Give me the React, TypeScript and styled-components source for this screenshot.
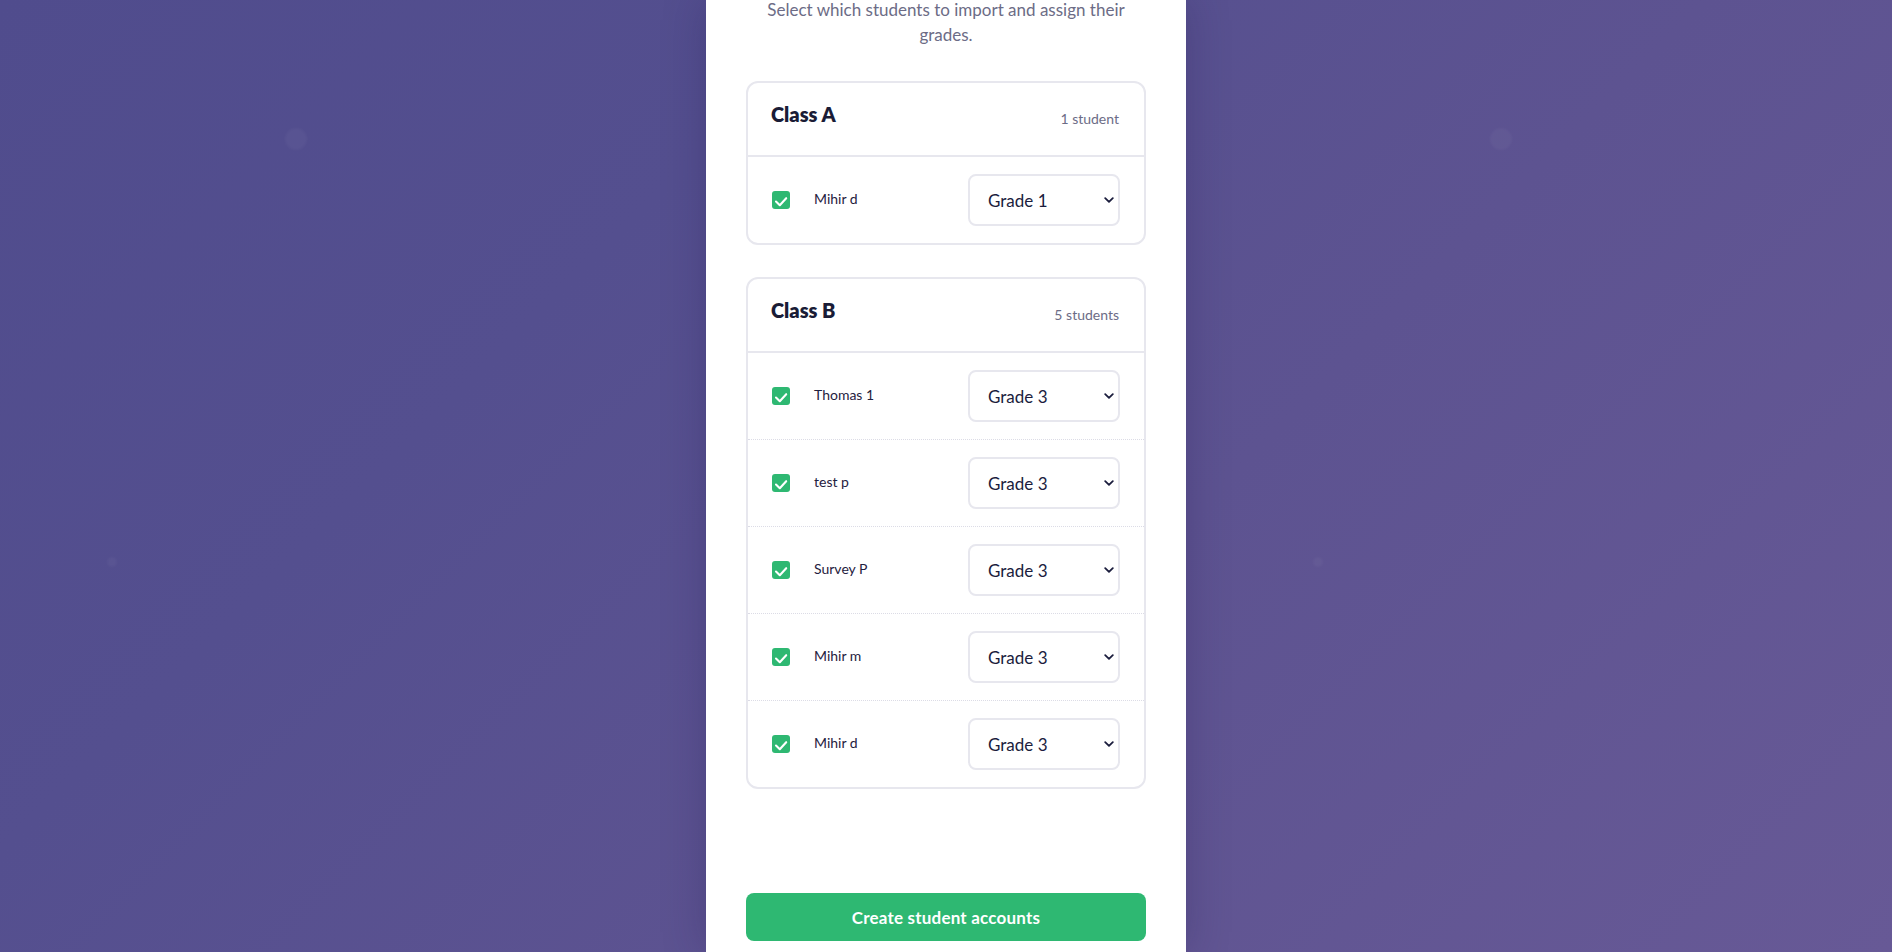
import styled, { createGlobalStyle } from "styled-components";

type Student = { name: string; grade: string };
type ClassGroup = { title: string; students: Student[] };

const classes: ClassGroup[] = [
  { title: "Class A", students: [{ name: "Mihir d", grade: "Grade 1" }] },
  {
    title: "Class B",
    students: [
      { name: "Thomas 1", grade: "Grade 3" },
      { name: "test p", grade: "Grade 3" },
      { name: "Survey P", grade: "Grade 3" },
      { name: "Mihir m", grade: "Grade 3" },
      { name: "Mihir d", grade: "Grade 3" },
    ],
  },
];

const grades = ["Kindergarten", "Grade 1", "Grade 2", "Grade 3", "Grade 4", "Grade 5", "Grade 6"];

export default function App() {
  return (
    <>
      <GlobalStyle />
      <Backdrop>
        <Dot $x={296} $y={139} $size={22} />
        <Dot $x={1501} $y={139} $size={22} />
        <Dot $x={112} $y={562} $size={10} />
        <Dot $x={1318} $y={562} $size={10} />
        <Panel>
          <Subtitle>Select which students to import and assign their grades.</Subtitle>
          <ClassList>
            {classes.map((group) => (
              <ClassCard key={group.title}>
                <CardHeader>
                  <ClassTitle>{group.title}</ClassTitle>
                  <StudentCount>
                    {group.students.length} {group.students.length === 1 ? "student" : "students"}
                  </StudentCount>
                </CardHeader>
                {group.students.map((s, i) => (
                  <StudentRow key={s.name + i} $first={i === 0}>
                    <CheckBox>
                      <svg width="18" height="18" viewBox="0 0 18 18">
                        <polyline points="4,10.5 7.8,14.2 14.2,7.2" fill="none" stroke="#fff" strokeWidth="2.1" strokeLinecap="round" strokeLinejoin="round" />
                      </svg>
                    </CheckBox>
                    <StudentName>{s.name}</StudentName>
                    <SelectWrap>
                      <GradeSelect defaultValue={s.grade}>
                        {grades.map((g) => (
                          <option key={g}>{g}</option>
                        ))}
                      </GradeSelect>
                      <Chevron width="10" height="6" viewBox="0 0 10 6">
                        <polyline points="1.2,1.2 5,4.8 8.8,1.2" fill="none" stroke="#1b1d3d" strokeWidth="1.8" strokeLinecap="round" strokeLinejoin="round" />
                      </Chevron>
                    </SelectWrap>
                  </StudentRow>
                ))}
              </ClassCard>
            ))}
          </ClassList>
          <Footer>
            <CreateButton type="button">Create student accounts</CreateButton>
          </Footer>
        </Panel>
      </Backdrop>
    </>
  );
}

const GlobalStyle = createGlobalStyle`
  * { box-sizing: border-box; }
  body {
    margin: 0;
    font-family: "Lato", "Noto Sans", sans-serif;
    overflow: hidden;
  }
`;

const Backdrop = styled.div`
  position: relative;
  width: 100vw;
  height: 100vh;
  overflow: hidden;
  display: flex;
  justify-content: center;
  background: linear-gradient(135deg, #504c8d 0%, #544f8f 30%, #5d5391 60%, #675996 100%);
`;

const Dot = styled.span<{ $x: number; $y: number; $size: number }>`
  position: absolute;
  left: ${(p) => p.$x - p.$size / 2}px;
  top: ${(p) => p.$y - p.$size / 2}px;
  width: ${(p) => p.$size}px;
  height: ${(p) => p.$size}px;
  border-radius: 50%;
  background: rgba(255, 255, 255, 0.035);
  filter: blur(1px);
`;

const Panel = styled.div`
  position: relative;
  width: 480px;
  height: 100%;
  background: #ffffff;
  padding: 0 40px;
  display: flex;
  flex-direction: column;
  box-shadow: 0 0 40px rgba(35, 25, 80, 0.28);
`;

const Subtitle = styled.p`
  margin: -3px 0 0;
  padding: 0 6px;
  text-align: center;
  font-size: 17px;
  line-height: 25px;
  color: #6c6c86;
`;

const ClassList = styled.div`
  display: flex;
  flex-direction: column;
  gap: 32px;
  margin-top: 34px;
`;

const ClassCard = styled.section`
  border: 2px solid #e7e7ee;
  border-radius: 12px;
  overflow: hidden;
`;

const CardHeader = styled.div`
  display: flex;
  align-items: flex-start;
  justify-content: space-between;
  height: 74px;
  padding: 19px 25px 0 23px;
  border-bottom: 2px solid #e7e7ee;
`;

const ClassTitle = styled.h3`
  margin: 0;
  font-size: 20px;
  line-height: 24px;
  font-weight: 800;
  color: #1a1c36;
`;

const StudentCount = styled.span`
  margin-top: 5px;
  font-size: 14px;
  line-height: 24px;
  color: #6c6c86;
`;

const StudentRow = styled.div<{ $first: boolean }>`
  display: flex;
  align-items: center;
  padding: 17px 24px;
  border-top: ${(p) => (p.$first ? "none" : "1px dotted #dcdce6")};
`;

const CheckBox = styled.span`
  width: 18px;
  height: 18px;
  flex: none;
  border-radius: 3px;
  background: #2eb872;
  display: flex;
`;

const StudentName = styled.span`
  margin-left: 24px;
  margin-top: -3px;
  font-size: 14px;
  color: #1f2140;
`;

const SelectWrap = styled.div`
  position: relative;
  margin-left: auto;
  width: 152px;
  height: 52px;
`;

const GradeSelect = styled.select`
  appearance: none;
  width: 100%;
  height: 100%;
  padding: 0 26px 0 18px;
  border: 2px solid #e7e7ee;
  border-radius: 8px;
  background: #fff;
  font-family: inherit;
  font-size: 17px;
  color: #1b1d3d;
  outline: none;
`;

const Chevron = styled.svg`
  position: absolute;
  right: 6px;
  top: 50%;
  margin-top: -3px;
  pointer-events: none;
`;

const Footer = styled.div`
  padding-top: 104px;
`;

const CreateButton = styled.button`
  width: 100%;
  height: 48px;
  border: none;
  border-radius: 8px;
  background: #2eb872;
  color: #fff;
  font-family: inherit;
  font-size: 17px;
  font-weight: 700;
  letter-spacing: 0.2px;
  cursor: pointer;
`;
